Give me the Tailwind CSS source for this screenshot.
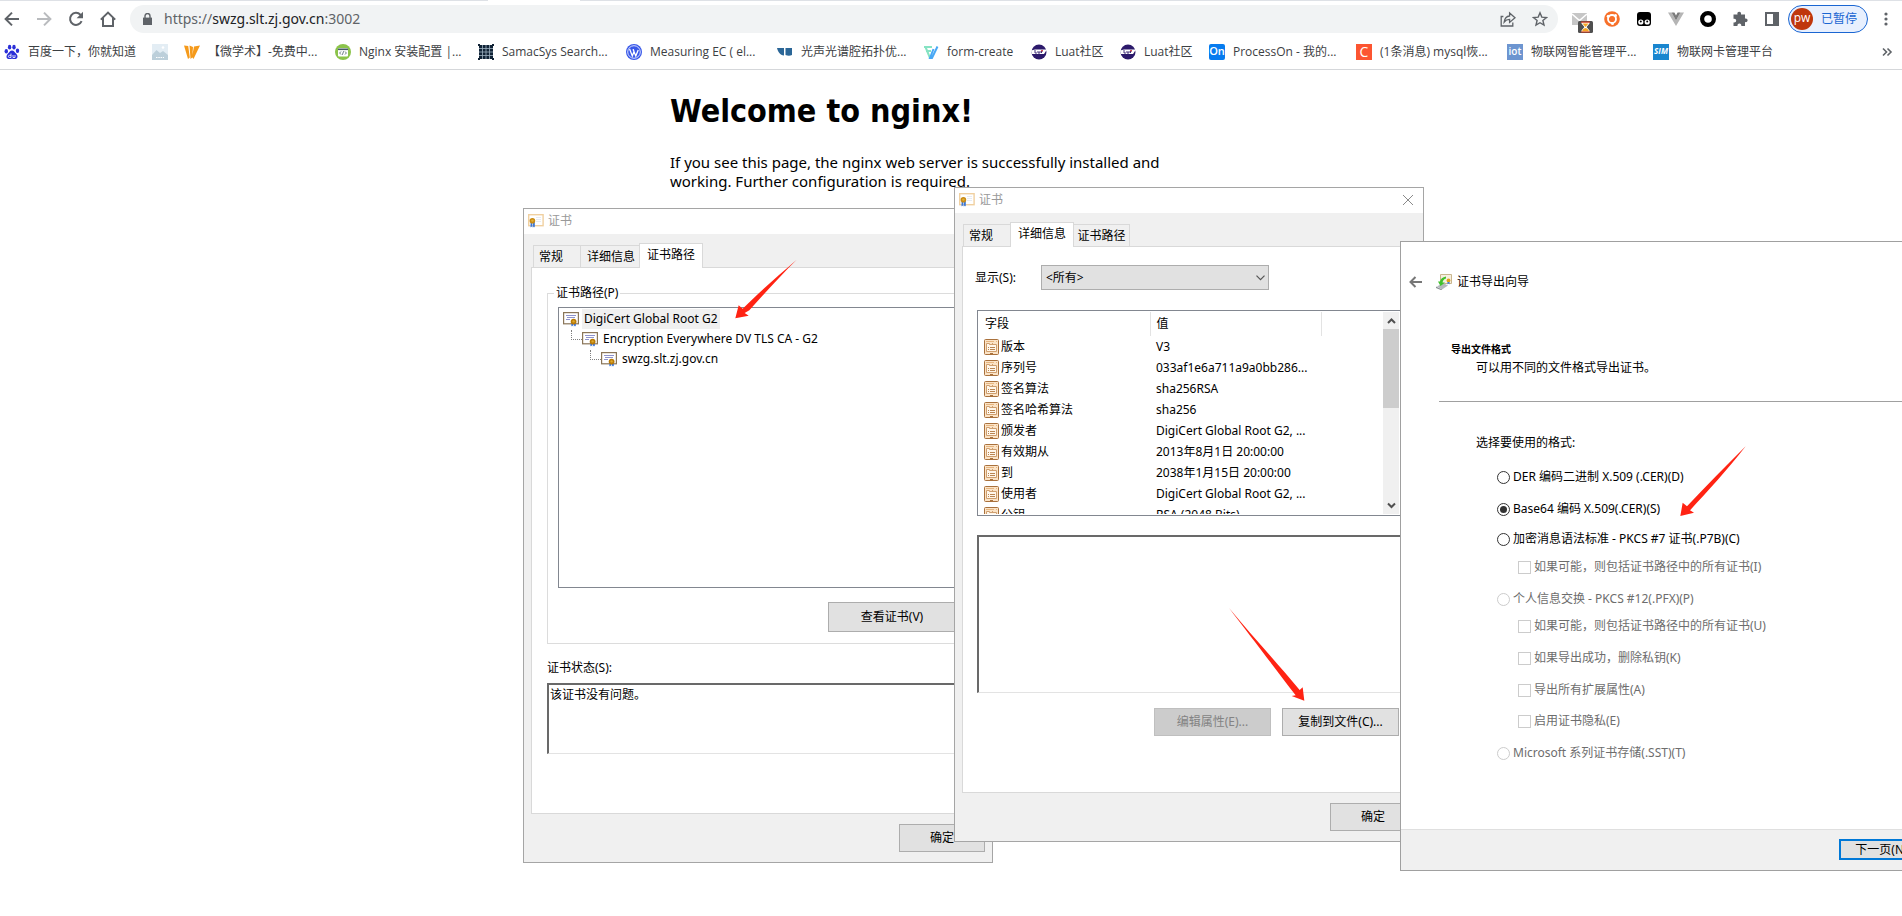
<!DOCTYPE html>
<html lang="zh-CN">
<head>
<meta charset="utf-8">
<title>Welcome to nginx!</title>
<script src="https://cdn.jsdelivr.net/npm/@tailwindcss/browser@4"></script>
</head>
<body class="bg-white">
<svg class="hidden" aria-hidden="true">
  <symbol id="cert-title" viewBox="0 0 16 14">
    <rect x="0.7" y="0.7" width="14.4" height="11" fill="#fff" stroke="#f0d0a0" stroke-width="1.4"/>
    <path d="M8 3h5v1H8zM8 5h5v1H8zM8 7h5v1H8z" fill="#e8ebf2"/>
    <path d="M2.6 8h1.8v5.4l-1-1-.9 1zM5 8h1.8v5.4l-.9-1-.9 1z" fill="#3b78d8"/>
    <circle cx="4.4" cy="6.8" r="2.8" fill="#c98a12"/>
    <circle cx="4.4" cy="6.6" r="1.2" fill="#e2b23c"/>
  </symbol>
  <symbol id="cert-node" viewBox="0 0 16 15">
    <rect x="0.6" y="0.6" width="14.8" height="11.2" fill="#fff" stroke="#8a7558" stroke-width="1.2"/>
    <path d="M3 3.500h10M4 5.500h8M3 7.500h4" stroke="#8f93cc" stroke-width="1"/>
    <path d="M8.400 10h1.800v4.400l-.9-.9-.9.9zM11 10h1.800v4.400l-.9-.9-.9.9z" fill="#2f6fdc"/>
    <circle cx="10.6" cy="9.6" r="2.9" fill="#b87a08"/>
    <circle cx="10.6" cy="9.4" r="1.2" fill="#e0a92c"/>
  </symbol>
  <symbol id="field" viewBox="0 0 15 16">
    <rect x="0.5" y="0.5" width="14" height="15" rx="1" fill="#fbe3c6" stroke="#a9713c"/>
    <path d="M2 2.500h8M12 2.500h1" stroke="#e6b580"/>
    <path d="M2.500 12.500v-8h3v1h7v7z" fill="#fff6ea" stroke="#cf9f6f"/>
    <path d="M8.500 4v2" stroke="#cf9f6f"/>
    <path d="M4 8.500h1M6 8.500h5M4 10.500h1M6 10.500h5" stroke="#b98552"/>
    <path d="M6 14.500h3" stroke="#a9713c"/>
  </symbol>
</svg>

<div class="relative flex h-screen flex-col overflow-hidden font-['Noto_Sans','Noto_Sans_CJK_SC',sans-serif] text-xs text-black">
  <header class="border-b border-[#d5d7da] bg-white">
    <div class="flex h-px"><span class="w-[488px] bg-[#dee1e6]"></span><span class="w-[92px]"></span><span class="flex-1 bg-[#dee1e6]"></span></div>
    <div class="flex h-9 items-center pr-2 text-[#5f6368]">
      <nav class="flex gap-4 pl-1">
        <button aria-label="后退"><svg class="size-4" viewBox="0 0 16 16" fill="none" stroke="#5f6368" stroke-width="2"><path d="M15 8H2M8 1.6 1.6 8 8 14.4"/></svg></button>
        <button aria-label="前进"><svg class="size-4" viewBox="0 0 16 16" fill="none" stroke="#b9bbbe" stroke-width="2"><path d="M1 8h13M8 1.6 14.4 8 8 14.4"/></svg></button>
        <button aria-label="刷新"><svg class="size-4" viewBox="0 0 16 16" fill="none" stroke="#5f6368" stroke-width="2"><path d="M13.6 10.2A6 6 0 1 1 12.4 3.7L14 5.4"/><path d="M15 .8v6.4H8.6z" fill="#5f6368" stroke="none"/></svg></button>
        <button aria-label="主页"><svg class="size-4" viewBox="0 0 16 16" fill="none" stroke="#5f6368" stroke-width="2"><path d="M.8 8.6 8 1.6l7.2 7M3 7v8h10V7"/></svg></button>
      </nav>
      <div class="ml-[14px] flex h-7 flex-1 items-center rounded-full bg-[#f1f3f4] pr-[10px] pl-[13px]">
        <svg class="h-3 w-[9px]" viewBox="0 0 9 12"><path d="M0 4.6h9V12H0z" fill="#5f6368"/><path d="M2 5V3a2.5 2.5 0 0 1 5 0v2" fill="none" stroke="#5f6368" stroke-width="1.4"/></svg>
        <span class="ml-3 flex-1 text-sm text-[#5f6368]">https://<span class="text-[#202124]">swzg.slt.zj.gov.cn</span>:3002</span>
        <button aria-label="分享"><svg class="size-4" viewBox="0 0 16 16" fill="none" stroke="#5f6368" stroke-width="1.3"><path d="M3.4 5.5H1.2V15h11.6v-3.5"/><path d="M9.6 2v3C6.6 5.3 4.6 7.6 4.2 11c1.400-1.900 3-2.600 5.400-2.600v3L15 6.700z"/></svg></button>
        <button aria-label="收藏" class="ml-4"><svg class="size-4" viewBox="0 0 16 16" fill="none" stroke="#5f6368" stroke-width="1.4"><path d="m8 1.8 1.8 4.3 4.7.4-3.6 3 1.1 4.6L8 11.7l-4 2.4 1.1-4.6-3.6-3 4.7-.4z"/></svg></button>
      </div>
      <div class="ml-[14px] flex items-center gap-4">
        <button aria-label="邮件" class="-mr-[6px] pt-2"><svg class="h-5 w-[22px]" viewBox="0 0 22 20"><path d="M0 0h15v12H0z" fill="#c6c6c6"/><path d="m0 1 7.5 6.5L15 1" fill="none" stroke="#fff" stroke-width="1.6"/><rect x="6" y="8" width="15" height="12" rx="1.5" fill="#4f4f4f"/><path d="M9.5 9h8v1.5L14.600 14l2.900 3.500V19h-8v-1.500l2.900-3.500-2.900-3.500z" fill="#fff"/><path d="M10.500 10.500h6L13.500 14zM10 18.500c.5-2 1.500-3 3.500-3.500 2 .5 3 1.500 3.500 3.500z" fill="#f5a623"/><path d="M9 8.600h9v1.200H9zM9 18.400h9v1.200H9z" fill="#d23a1e"/></svg></button>
        <button aria-label="扩展 1"><svg class="size-4" viewBox="0 0 16 16"><circle cx="8" cy="8" r="7.800" fill="#f7702a"/><circle cx="8" cy="8" r="4" fill="none" stroke="#fff" stroke-width="1.800"/><g fill="#fff"><circle cx="4.200" cy="5.200" r="1.500"/><circle cx="11.500" cy="4.500" r="1.500"/><circle cx="8.500" cy="12.500" r="1.500"/></g><circle cx="8" cy="8" r="1.600" fill="#f7702a"/></svg></button>
        <button aria-label="扩展 2"><svg class="size-4" viewBox="0 0 16 16"><rect x="1" y="1" width="14" height="14" rx="3" fill="#000"/><circle cx="4.800" cy="11" r="2.600" fill="#fff"/><circle cx="11.200" cy="11" r="2.600" fill="#fff"/><circle cx="4.800" cy="10.600" r="1" fill="#000"/><circle cx="11.200" cy="10.600" r="1" fill="#000"/></svg></button>
        <button aria-label="扩展 3"><svg class="size-4" viewBox="0 0 16 16"><path d="M0 1.500h3.600L8 9.500l4.400-8H16L8 15z" fill="#b5b5b5"/><path d="M3.600 1.500h2.800L8 4.500l1.600-3h2.800L8 9.500z" fill="#7b7b7b"/></svg></button>
        <button aria-label="扩展 4"><svg class="size-4" viewBox="0 0 16 16"><circle cx="8" cy="8" r="5.900" fill="none" stroke="#000" stroke-width="4.200"/></svg></button>
        <button aria-label="扩展程序"><svg class="size-4" viewBox="0 0 16 16"><path d="M1.500 3.500h4C5 1.800 5.800.8 7.200.8S9.400 1.800 9 3.500h4v4c1.700-.4 2.600.5 2.600 1.800s-.9 2.200-2.600 1.800v4H9.300c.3-1.800-.6-2.700-1.900-2.700s-2.200.9-1.900 2.700h-4v-3.600c1.800.3 2.700-.6 2.700-1.900S3.300 7.400 1.500 7.700z" fill="#5f6368"/></svg></button>
        <button aria-label="侧边栏"><svg class="size-4" viewBox="0 0 16 16"><path d="M1 1h14v14H1zM3 3v10h6V3z" fill="#5f6368" fill-rule="evenodd"/></svg></button>
      </div>
      <button class="ml-2 flex h-7 w-20 items-center gap-2 rounded-full border border-[#1a66d2] bg-[#e8f0fe] pl-[2px] text-xs text-[#1a66d2]"><span class="flex size-[22px] items-center justify-center rounded-full bg-[#bf360c] pb-[2px] font-['Open_Sans'] text-xs text-white">pw</span>已暂停</button>
      <button aria-label="菜单" class="ml-[10px]"><svg class="size-4" viewBox="0 0 16 16" fill="#5f6368"><circle cx="8" cy="3" r="1.600"/><circle cx="8" cy="8" r="1.600"/><circle cx="8" cy="13" r="1.600"/></svg></button>
    </div>
    <div class="flex h-8 items-center justify-between pr-[9px] pb-[3px] pl-1 font-['Open_Sans','Noto_Sans_CJK_SC',sans-serif] text-[#3c4043]">
      <nav class="grid grid-cols-[148px_32px_151px_143px_148px_151px_146px_108px_89px_89px_147px_151px_146px_auto] whitespace-nowrap [&>a]:flex [&>a]:items-center [&>a]:gap-2">
        <a href="#"><svg class="size-4" viewBox="0 0 16 16" fill="#2a2fd8"><ellipse cx="2.300" cy="7.200" rx="1.700" ry="2.200"/><ellipse cx="5.600" cy="3.200" rx="1.700" ry="2.400"/><ellipse cx="10" cy="3.200" rx="1.700" ry="2.400"/><ellipse cx="13.500" cy="6.800" rx="1.700" ry="2.200"/><path d="M8 6.500c2 0 2.500 1.600 4 3 2.600 2.400 1.500 5.600-1 5.600-1.200 0-2-.4-3-.4s-1.800.4-3 .4c-2.600 0-3.500-3.200-1-5.600 1.500-1.400 2-3 4-3z"/><path d="M7 9.500v4H5.500a1 1 0 0 1 0-2.200H7M9 11v2.500h2V11" fill="none" stroke="#fff" stroke-width=".8"/></svg>百度一下，你就知道</a>
        <a href="#" aria-label="书签"><svg class="size-4" viewBox="0 0 16 16"><path d="M0 0h16v16H0z" fill="#e3edf4"/><path d="M0 11 4.500 6 8 9l3-2 5 4v5H0z" fill="#bccfda"/><circle cx="11" cy="3.500" r="1.300" fill="#fff"/><path d="M4 13.500h8" stroke="#fff" stroke-dasharray="1.500 .8"/></svg></a>
        <a href="#"><svg class="size-4" viewBox="0 0 16 16" fill="#f59a1b"><path d="m0 1.500 4.200.5 1.600 11.500L4 15zM5.500 1.500 9 3l-.8 10.500L6.500 15zM10 2.500l6-1L9.500 15 8 13z"/></svg>【微学术】-免费中...</a>
        <a href="#"><svg class="size-4" viewBox="0 0 16 16"><circle cx="8" cy="8" r="8" fill="#8bc34a"/><rect x="3" y="4" width="10" height="8.500" rx="1" fill="#fff"/><path d="M3 4.500h10v1.600H3z" fill="#455a64"/><path d="M6 7.500 4.600 9 6 10.500M10 7.500 11.400 9 10 10.500M8.600 7.200l-1.200 3.600" fill="none" stroke="#455a64" stroke-width=".8"/></svg>Nginx 安装配置 |...</a>
        <a href="#"><svg class="size-4" viewBox="0 0 16 16"><path d="M1 1h14v14H1z" fill="#102235"/><path d="M4.500 1v14M8 1v14M11.500 1v14M1 4.500h14M1 8h14M1 11.500h14" stroke="#9db0c0" stroke-width=".8"/><path d="M0 0h2v2H0zM14 0h2v2h-2zM0 14h2v2H0zM14 14h2v2h-2z" fill="#102235"/></svg>SamacSys Search...</a>
        <a href="#"><svg class="size-4" viewBox="0 0 16 16"><circle cx="8" cy="8" r="8" fill="#3858e9"/><circle cx="8" cy="8" r="6.300" fill="none" stroke="#fff" stroke-width=".8"/><path d="m3.600 5 2.700 7L8 7.500l-.8-2.300M7 5.200 9.800 12l2.400-6" fill="none" stroke="#fff" stroke-width="1.300"/></svg>Measuring EC ( el...</a>
        <a href="#"><svg class="size-4" viewBox="0 0 16 16" fill="#2b6697"><path d="M0 4h7v7.500C3 11 1 8 0 4zM8.500 4h6.500v7q-3 1.500-6.500 0z"/></svg>光声光谱腔拓扑优...</a>
        <a href="#"><svg class="size-4" viewBox="0 0 16 16" fill="none" stroke-width="2"><path d="M1 3h8M3 7h5M2.500 3 7 14" stroke="#86e3c3"/><path d="M14.500 2.500 9 14H7l3.500-9" stroke="#48a8f5"/></svg>form-create</a>
        <a href="#"><svg class="size-4" viewBox="0 0 16 16"><circle cx="8" cy="8" r="7.500" fill="#2c1a6b"/><path d="M0 6.500 4 5.500h12L13 10H1z" fill="#fff"/><path d="M4 6v3h2M7 7v2h2V7M10.500 9V7h1.500" fill="none" stroke="#2c1a6b" stroke-width=".9"/><path d="M10 6.200h2v1h-2z" fill="#d33"/></svg>Luat社区</a>
        <a href="#"><svg class="size-4" viewBox="0 0 16 16"><circle cx="8" cy="8" r="7.500" fill="#2c1a6b"/><path d="M0 6.500 4 5.500h12L13 10H1z" fill="#fff"/><path d="M4 6v3h2M7 7v2h2V7M10.500 9V7h1.500" fill="none" stroke="#2c1a6b" stroke-width=".9"/><path d="M10 6.200h2v1h-2z" fill="#d33"/></svg>Luat社区</a>
        <a href="#"><span class="flex size-4 items-center justify-center rounded-xs bg-[#067bef] text-[11px] font-semibold text-white">On</span>ProcessOn - 我的...</a>
        <a href="#"><span class="flex size-4 items-center justify-center bg-[#fc5531] text-sm text-white">C</span>(1条消息) mysql恢...</a>
        <a href="#"><span class="flex size-4 items-center justify-center bg-[#6d95d0] text-[10px] font-semibold text-white">iot</span>物联网智能管理平...</a>
        <a href="#"><span class="flex size-4 items-center justify-center bg-[#1a86cf] text-[8px] font-bold text-white italic">SIM</span>物联网卡管理平台</a>
      </nav>
      <button aria-label="更多书签"><svg class="h-3 w-3" viewBox="0 0 12 12" fill="none" stroke="#5f6368" stroke-width="1.600"><path d="m2 2.500 3.500 3.500L2 9.500M6.500 2.500 10 6l-3.500 3.500"/></svg></button>
    </div>
  </header>

  <main class="mx-auto w-[562px]">
    <h1 class="mt-[22px] font-['DejaVu_Sans_Condensed','DejaVu_Sans',sans-serif] text-[32px] leading-[39px] font-bold">Welcome to nginx!</h1>
    <p class="mt-[22px] pr-8 text-[15px] leading-[19px]">If you see this page, the nginx web server is successfully installed and working. Further configuration is required.</p>
  </main>

  <!-- 证书：证书路径 -->
  <section class="absolute top-[208px] left-[523px] flex w-[470px] flex-col border border-[#a5a5a5] bg-[#f0f0f0]">
    <div class="flex h-[25px] items-center gap-1 bg-white pb-px pl-1 text-[#999]"><svg class="h-[14px] w-4"><use href="#cert-title"/></svg>证书</div>
    <div class="px-[7px] pt-[9px] pb-[10px]">
      <div class="relative flex h-[25px] items-end pl-[2px]">
        <button class="h-[23px] w-[47px] border border-r-0 border-[#d9d9d9] pl-[5px] text-left">常规</button>
        <button class="h-[23px] w-[59px] border border-r-0 border-[#d9d9d9] pl-[6px] text-left">详细信息</button>
        <button class="h-[25px] w-16 border border-b-0 border-[#d9d9d9] bg-white pb-[2px] text-center">证书路径</button>
      </div>
      <div class="-mt-px flex h-[547px] flex-col border border-[#d9d9d9] bg-white px-[15px] pt-4">
        <fieldset class="h-[360px] border border-[#dcdcdc] px-[10px]">
          <legend class="-ml-1 px-[2px] leading-[18px]">证书路径(P)</legend>
          <ul class="mt-[5px] h-[281px] border border-[#828790] pt-px pl-1">
            <li class="flex h-5 items-center"><svg class="mt-px h-[15px] w-4"><use href="#cert-node"/></svg><span class="ml-[3px] bg-[#f0f0f0] px-[2px] leading-5">DigiCert Global Root G2</span></li>
            <li class="flex h-5 items-center pl-2"><span class="mb-[9px] h-[10px] w-[11px] border-b border-l border-dotted border-[#808080]"></span><svg class="mt-px h-[15px] w-4"><use href="#cert-node"/></svg><span class="ml-[3px] px-[2px] leading-5">Encryption Everywhere DV TLS CA - G2</span></li>
            <li class="flex h-5 items-center pl-[27px]"><span class="mb-[9px] h-[10px] w-[11px] border-b border-l border-dotted border-[#808080]"></span><svg class="mt-px h-[15px] w-4"><use href="#cert-node"/></svg><span class="ml-[3px] px-[2px] leading-5">swzg.slt.zj.gov.cn</span></li>
          </ul>
          <div class="flex justify-end pt-[14px] pr-[2px]"><button class="h-[30px] w-32 border border-[#adadad] bg-[#e1e1e1]">查看证书(V)</button></div>
        </fieldset>
        <label for="status" class="mt-4 leading-4">证书状态(S):</label>
        <textarea id="status" readonly class="mt-[7px] h-[71px] resize-none border-t-2 border-r border-b border-l-2 border-t-[#696969] border-r-[#e3e3e3] border-b-[#e3e3e3] border-l-[#696969] pt-[2px] pl-px leading-4">该证书没有问题。</textarea>
      </div>
      <div class="flex justify-end pt-[10px]"><button class="h-7 w-[86px] border border-[#adadad] bg-[#e1e1e1]">确定</button></div>
    </div>
    <svg class="absolute top-[50px] left-[210px] h-[62px] w-16" viewBox="0 0 192 186" fill="#ff2313"><path d="M188 2C130 52 70 105 26 149L14 139 4 178l40-8-12-8 14-8C90 105 140 50 188 2z"/></svg>
  </section>

  <!-- 证书：详细信息 -->
  <section class="absolute top-[187px] left-[954px] flex w-[470px] flex-col border border-[#a5a5a5] bg-[#f0f0f0]">
    <div class="flex h-[25px] items-center gap-1 bg-white pr-[10px] pb-px pl-1 text-[#999]"><svg class="h-[14px] w-4"><use href="#cert-title"/></svg>证书<button aria-label="关闭" class="ml-auto"><svg class="size-[10px]" viewBox="0 0 10 10" stroke="#8a8a8a"><path d="m0 0 10 10M10 0 0 10"/></svg></button></div>
    <div class="px-[7px] pt-[9px] pb-[10px]">
      <div class="relative flex h-[25px] items-end pl-px">
        <button class="h-[23px] w-[47px] border border-r-0 border-[#d9d9d9] pl-[5px] text-left">常规</button>
        <button class="h-[25px] w-16 border border-b-0 border-[#d9d9d9] bg-white pb-[2px] text-center">详细信息</button>
        <button class="h-[23px] w-14 border border-l-0 border-[#d9d9d9] text-center">证书路径</button>
      </div>
      <div class="-mt-px flex h-[547px] flex-col border border-[#d9d9d9] bg-white px-[14px] pt-[18px]">
        <div class="-ml-[2px] flex h-[25px] items-center gap-[2px]">
          <label for="show" class="w-16">显示(S):</label>
          <div class="relative">
            <select id="show" class="h-[25px] w-[228px] appearance-none border border-[#adadad] bg-[#e1e1e1] pl-1"><option>&lt;所有&gt;</option></select>
            <svg class="pointer-events-none absolute top-[10px] right-1 h-[6px] w-[9px]" viewBox="0 0 9 6" fill="none" stroke="#555" stroke-width="1.200"><path d="m.5.700 4 4 4-4"/></svg>
          </div>
        </div>
        <div class="mt-5 flex h-[206px] w-[424px] border border-[#828790] p-px">
          <div class="min-w-0 flex-1 overflow-hidden">
            <table class="w-full table-fixed text-left whitespace-nowrap">
              <colgroup><col class="w-[171px]"><col class="w-[171px]"><col></colgroup>
              <thead><tr class="h-6"><th class="border-r border-[#e3e3e3] pl-[6px] font-normal">字段</th><th class="border-r border-[#e3e3e3] pl-[6px] font-normal">值</th><th class="p-0"></th></tr></thead>
              <tbody class="[&_td]:p-0 [&_td:nth-child(2)]:pl-[6px] [&_td>div]:flex [&_td>div]:h-[21px] [&_td>div]:items-center [&_td>div]:gap-[2px] [&_td>div]:pl-[5px]">
                <tr><td><div><svg class="h-4 w-[15px]"><use href="#field"/></svg>版本</div></td><td>V3</td></tr>
                <tr><td><div><svg class="h-4 w-[15px]"><use href="#field"/></svg>序列号</div></td><td>033af1e6a711a9a0bb286...</td></tr>
                <tr><td><div><svg class="h-4 w-[15px]"><use href="#field"/></svg>签名算法</div></td><td>sha256RSA</td></tr>
                <tr><td><div><svg class="h-4 w-[15px]"><use href="#field"/></svg>签名哈希算法</div></td><td>sha256</td></tr>
                <tr><td><div><svg class="h-4 w-[15px]"><use href="#field"/></svg>颁发者</div></td><td>DigiCert Global Root G2, ...</td></tr>
                <tr><td><div><svg class="h-4 w-[15px]"><use href="#field"/></svg>有效期从</div></td><td>2013年8月1日 20:00:00</td></tr>
                <tr><td><div><svg class="h-4 w-[15px]"><use href="#field"/></svg>到</div></td><td>2038年1月15日 20:00:00</td></tr>
                <tr><td><div><svg class="h-4 w-[15px]"><use href="#field"/></svg>使用者</div></td><td>DigiCert Global Root G2, ...</td></tr>
                <tr><td><div><svg class="h-4 w-[15px]"><use href="#field"/></svg>公钥</div></td><td>RSA (2048 Bits)</td></tr>
              </tbody>
            </table>
          </div>
          <div class="flex w-4 flex-col items-center bg-[#f0f0f0]">
            <svg class="h-[17px] w-[9px]" viewBox="0 0 9 17" fill="none" stroke="#505050" stroke-width="2"><path d="m1 11 3.500-3.500L8 11"/></svg>
            <span class="h-[79px] w-full bg-[#cdcdcd]"></span>
            <svg class="mt-auto h-[17px] w-[9px]" viewBox="0 0 9 17" fill="none" stroke="#505050" stroke-width="2"><path d="m1 6.500 3.500 3.500L8 6.500"/></svg>
          </div>
        </div>
        <textarea aria-label="字段值" readonly class="mt-[19px] h-[158px] w-[424px] resize-none border-t-2 border-r border-b border-l-2 border-t-[#696969] border-r-[#e3e3e3] border-b-[#e3e3e3] border-l-[#696969]"></textarea>
        <div class="mt-[15px] flex w-[422px] justify-end gap-[11px]">
          <button disabled class="h-7 w-[117px] border border-[#bfbfbf] bg-[#cccccc] text-[#838383]">编辑属性(E)...</button>
          <button class="h-7 w-[117px] border border-[#adadad] bg-[#e1e1e1]">复制到文件(C)...</button>
        </div>
      </div>
      <div class="flex justify-end pt-[10px]"><button class="h-7 w-[86px] border border-[#adadad] bg-[#e1e1e1]">确定</button></div>
    </div>
    <svg class="absolute top-[418px] left-[272px] h-[96px] w-[78px]" viewBox="0 0 234 288" fill="#ff2313"><path d="M6 6C70 84 150 170 218 252L227 244 232 284 194 270 206 268C150 194 70 90 6 6z"/></svg>
  </section>

  <!-- 证书导出向导 -->
  <section class="absolute top-[241px] left-[1400px] flex w-[536px] flex-col border border-[#a0a0a0] bg-white">
    <div class="flex items-center pt-[31px] pl-2">
      <button aria-label="返回"><svg class="h-3 w-[13px]" viewBox="0 0 13 12" fill="none" stroke="#777" stroke-width="2"><path d="M13 6H1.500M6.500 1 1.500 6l5 5"/></svg></button>
      <svg class="mr-[5px] ml-[14px] size-4" viewBox="0 0 16 16"><path d="M4.500.5h11v9h-11z" fill="#f6efe0" stroke="#c9b68e"/><path d="M1 12.500 7 9l5 2.500-6 4z" fill="#b5b9bd"/><path d="M0 12.500 6 15.500v1l-6-2.500z" fill="#8a8f94"/><path d="M10 2.500C6.500 3 4.500 5 4 7.500H2L4.500 12 9 8.500H6.500C7 6.500 8 5 10 4.500z" fill="#3fc12c"/><circle cx="12.500" cy="6.500" r="1.900" fill="#e0a21c"/><path d="M11.500 8h2v2.500l-1-1-1 1z" fill="#3b78d8"/></svg>
      <h2 class="leading-[18px]">证书导出向导</h2>
    </div>
    <div class="ml-[38px] border-b border-[#a0a0a0] pt-[49px] pb-[23px] pl-3">
      <h3 class="text-[10px] leading-[18px] font-bold">导出文件格式</h3>
      <p class="pl-[25px] leading-5">可以用不同的文件格式导出证书。</p>
    </div>
    <form class="pt-[31px] pb-[66px] pl-[75px] [&_input]:m-0 [&_input]:size-[13px] [&_input]:appearance-none [&_input]:border [&_input]:border-[#333] [&_input]:bg-white [&_input:disabled]:border-[#ccc] [&_input[type=radio]]:rounded-full [&_label]:flex [&_label]:items-center [&_label]:leading-5 [&_label:has(:disabled)]:text-[#6d6d6d]">
      <p class="leading-5">选择要使用的格式:</p>
      <label class="mt-[14px] gap-[3px] pl-[21px]"><input type="radio" name="f">DER 编码二进制 X.509 (.CER)(D)</label>
      <label class="mt-3 gap-[3px] pl-[21px]"><input type="radio" name="f" checked class="checked:bg-[#333] checked:bg-clip-content checked:p-[2px]">Base64 编码 X.509(.CER)(S)</label>
      <label class="mt-[10px] gap-[3px] pl-[21px]"><input type="radio" name="f">加密消息语法标准 - PKCS #7 证书(.P7B)(C)</label>
      <label class="mt-2 gap-[3px] pl-[42px]"><input type="checkbox" disabled>如果可能，则包括证书路径中的所有证书(I)</label>
      <label class="mt-3 gap-[3px] pl-[21px]"><input type="radio" name="f" disabled>个人信息交换 - PKCS #12(.PFX)(P)</label>
      <label class="mt-[7px] gap-[3px] pl-[42px]"><input type="checkbox" disabled>如果可能，则包括证书路径中的所有证书(U)</label>
      <label class="mt-3 gap-[3px] pl-[42px]"><input type="checkbox" disabled>如果导出成功，删除私钥(K)</label>
      <label class="mt-3 gap-[3px] pl-[42px]"><input type="checkbox" disabled>导出所有扩展属性(A)</label>
      <label class="mt-[11px] gap-[3px] pl-[42px]"><input type="checkbox" disabled>启用证书隐私(E)</label>
      <label class="mt-3 gap-[3px] pl-[21px]"><input type="radio" name="f" disabled>Microsoft 系列证书存储(.SST)(T)</label>
    </form>
    <footer class="flex h-[41px] border-t border-[#dfdfdf] bg-[#f0f0f0] pt-[9px] pl-[438px]"><button class="h-[21px] w-[85px] border-2 border-[#0078d7] bg-[#e1e1e1] leading-4">下一页(N)</button></footer>
    <svg class="absolute top-[203px] left-[278px] h-[74px] w-[68px]" viewBox="0 0 204 222" fill="#ff2313"><path d="M200 4C142 62 80 125 24 184L11 173 4 213 45 203 33 196C85 140 145 75 200 4z"/></svg>
  </section>
</div>
</body>
</html>
